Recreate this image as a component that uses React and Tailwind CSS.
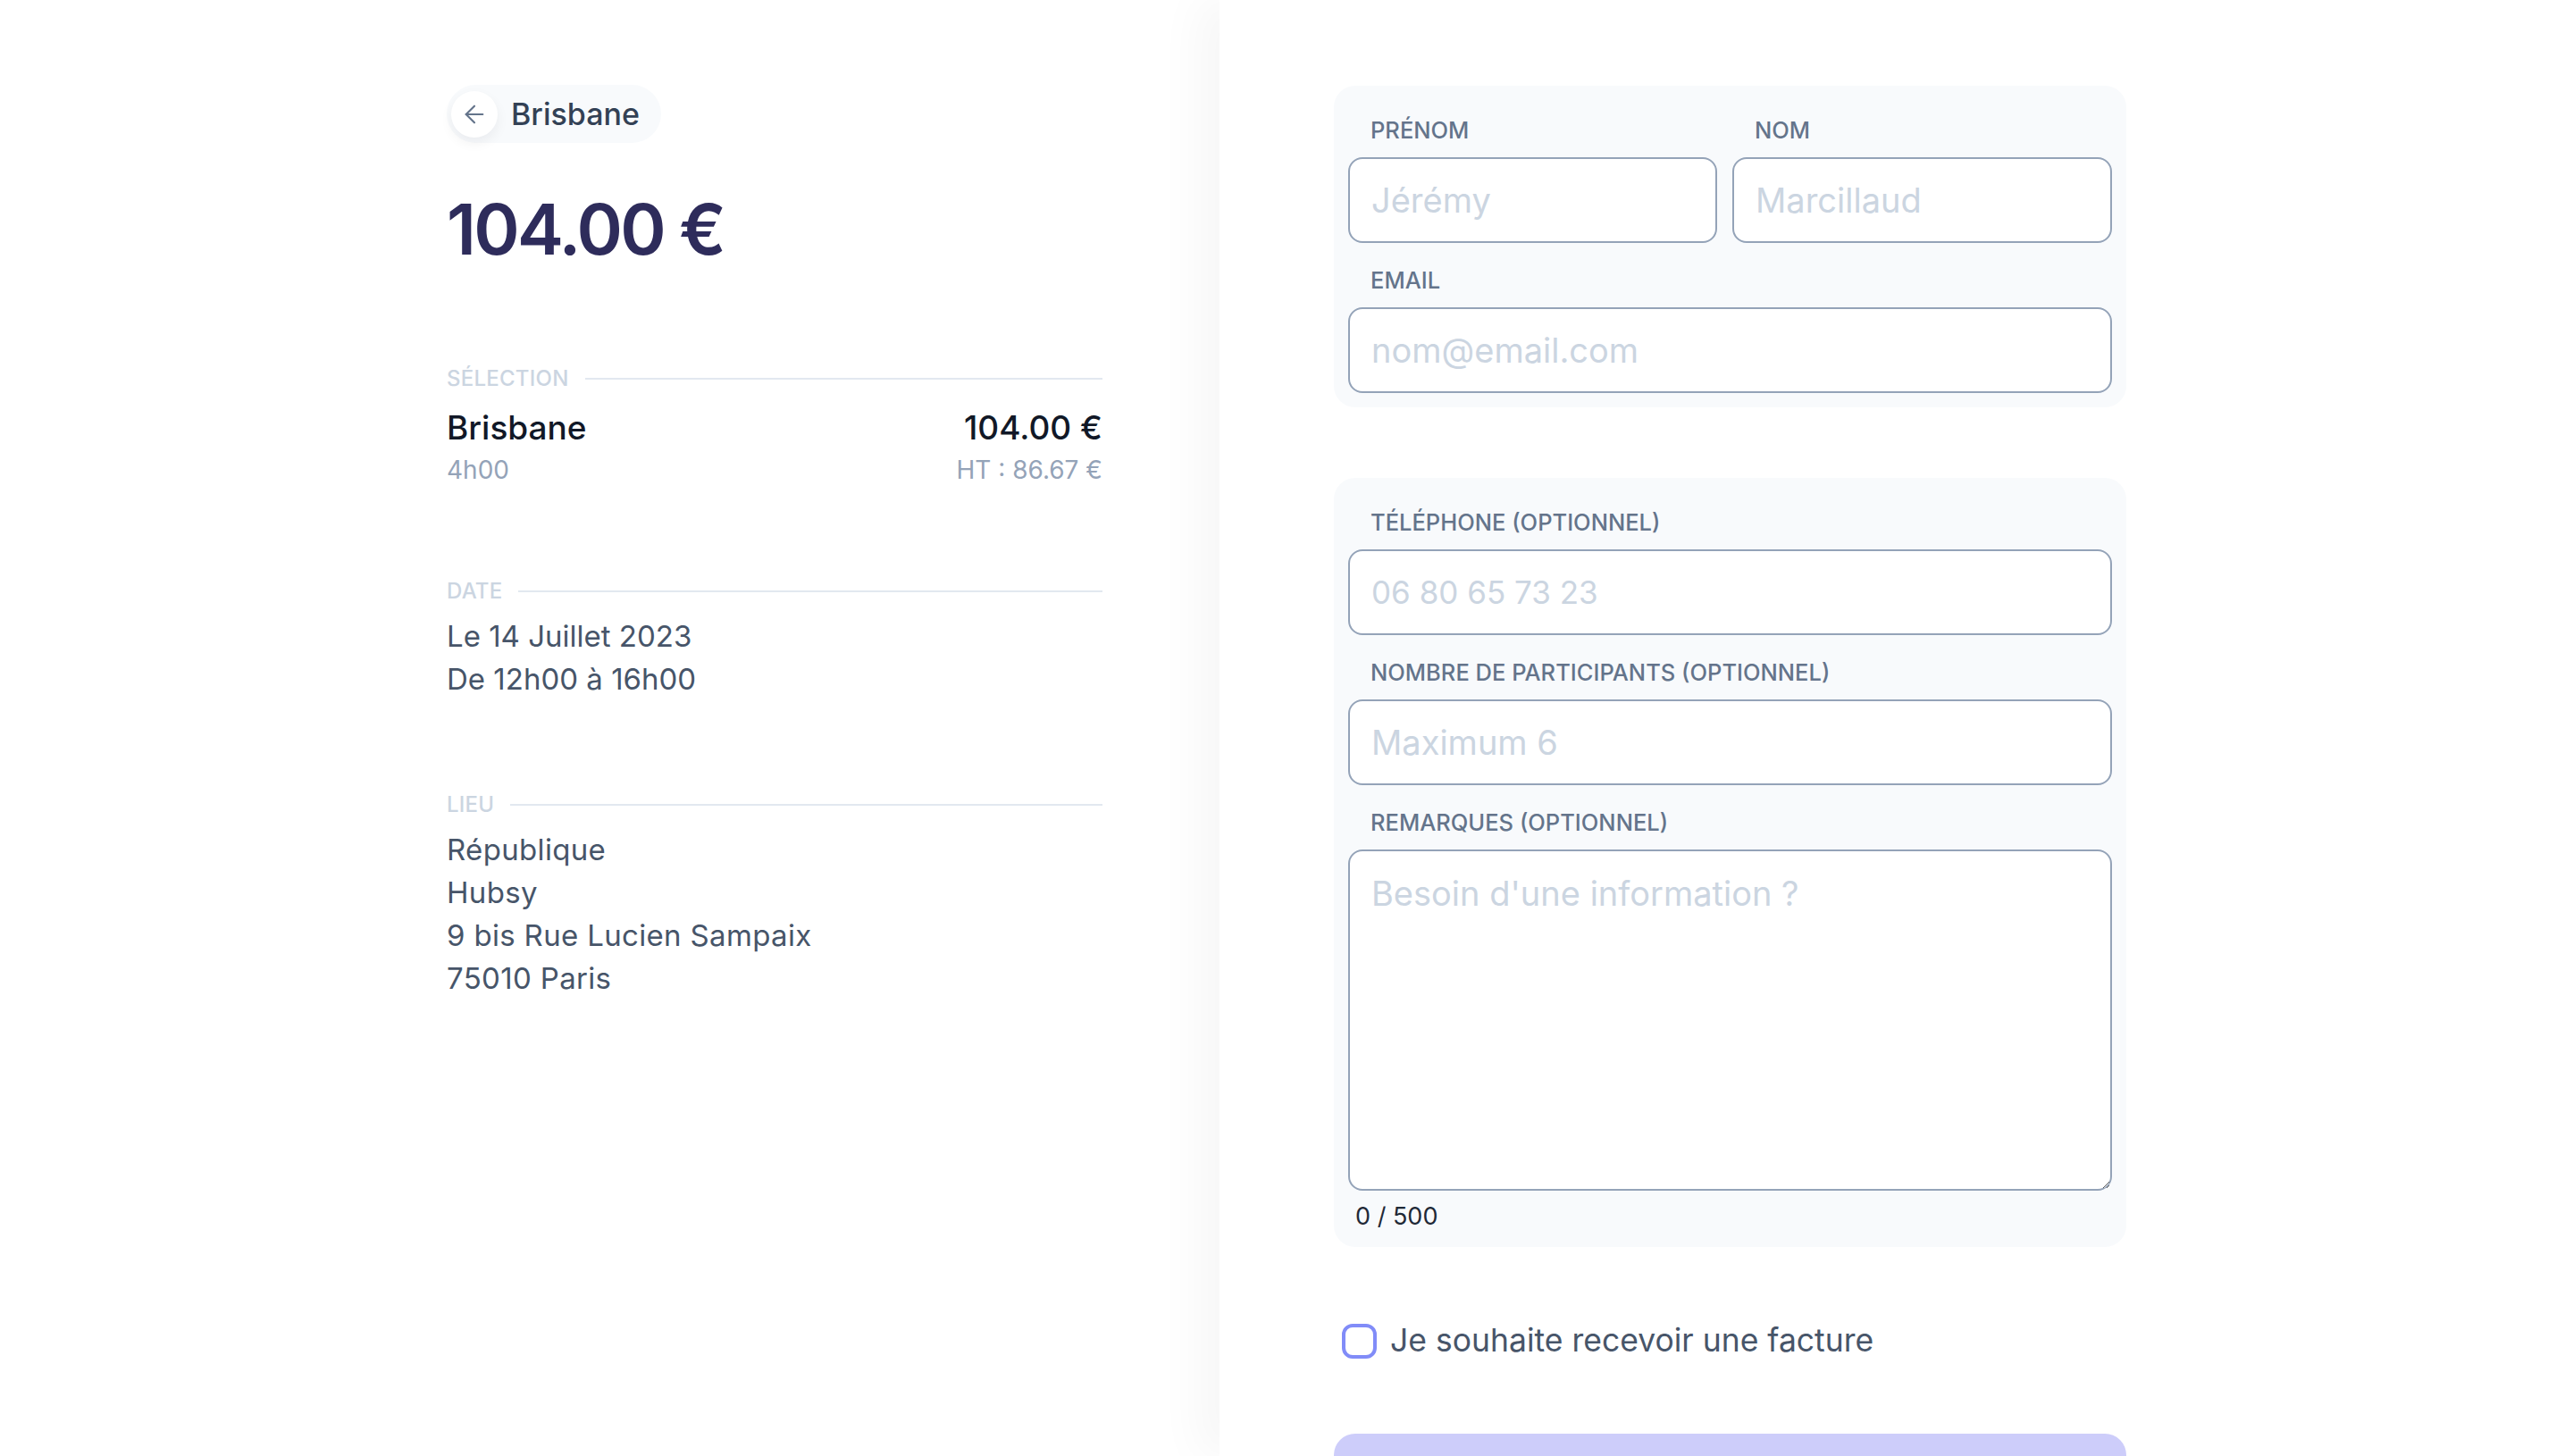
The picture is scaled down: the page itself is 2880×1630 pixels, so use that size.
import React from "react";
import { ArrowLeft } from "lucide-react";

function SectionLabel({ children }) {
  return (
    <div className="flex items-center gap-[18px] h-[32px]">
      <span className="text-[24px] leading-[32px] font-medium uppercase text-[#cbd5e1] tracking-[0.01em]">{children}</span>
      <div className="flex-1 h-[2px] bg-[#e2e8f0]" />
    </div>
  );
}

function Field({ label, children }) {
  return (
    <div className="flex flex-col">
      <label className="pt-[16px] pl-[25px] mb-[12px] h-[36px] text-[25.5px] leading-[36px] font-medium uppercase text-[#64748b] box-content">
        {label}
      </label>
      {children}
    </div>
  );
}

const inputCls =
  "w-full h-[96px] rounded-[16px] border-2 border-[#94a3b8] bg-white px-[24px] text-[38px] text-[#334155] placeholder:text-[#cbd5e1] outline-none";

export default function App() {
  return (
    <div className="flex h-[1630px] overflow-hidden bg-white font-['Inter','Noto_Sans',sans-serif]">
      {/* Left panel */}
      <div className="w-[1365px] shrink-0 flex justify-end pr-[131px] pt-[95px]">
        <div className="w-[734px] flex flex-col">
          <div className="self-start flex items-center h-[65px] rounded-full bg-[#f8fafc] pl-[5px] pr-[24px] gap-[15px]">
            <div className="w-[52px] h-[52px] rounded-full bg-white shadow-[0_6px_14px_rgba(15,23,42,0.06)] flex items-center justify-center">
              <ArrowLeft className="w-[32px] h-[32px] text-[#64748b]" strokeWidth={1.6} />
            </div>
            <span className="text-[34px] font-medium text-[#334155]">Brisbane</span>
          </div>

          <div className="mt-[57px] text-[78px] leading-[80px] font-semibold text-[#2e2c5b] tracking-[-0.035em]">
            104.00 €
          </div>

          <div className="mt-[111px]">
            <SectionLabel>Sélection</SectionLabel>
            <div className="mt-[15px] flex justify-between items-start">
              <div className="flex flex-col">
                <span className="text-[37px] leading-[48px] font-medium text-[#111827]">Brisbane</span>
                <span className="mt-[3px] text-[28px] leading-[40px] text-[#94a3b8]">4h00</span>
              </div>
              <div className="flex flex-col items-end">
                <span className="text-[37px] leading-[48px] font-medium text-[#111827]">104.00 €</span>
                <span className="mt-[3px] text-[28px] leading-[40px] text-[#94a3b8]">HT : 86.67 €</span>
              </div>
            </div>
          </div>

          <div className="mt-[100px]">
            <SectionLabel>Date</SectionLabel>
            <div className="mt-[10px] flex flex-col text-[33px] leading-[48px] text-[#475569]">
              <span>Le 14 Juillet 2023</span>
              <span>De 12h00 à 16h00</span>
            </div>
          </div>

          <div className="mt-[101px]">
            <SectionLabel>Lieu</SectionLabel>
            <div className="mt-[10px] flex flex-col text-[33px] leading-[48px] text-[#475569] tracking-[0.01em]">
              <span>République</span>
              <span>Hubsy</span>
              <span>9 bis Rue Lucien Sampaix</span>
              <span>75010 Paris</span>
            </div>
          </div>
        </div>
      </div>

      {/* Right panel */}
      <div className="relative z-10 flex-1 bg-white shadow-[-24px_0_48px_rgba(15,23,42,0.035)] pl-[128px] pt-[96px]">
        <div className="w-[887px] flex flex-col">
          <div className="rounded-[24px] bg-[#f8fafc] p-[16px] flex flex-col gap-[8px]">
            <div className="grid grid-cols-[413px_1fr] gap-[17px]">
              <Field label="Prénom">
                <input className={inputCls} placeholder="Jérémy" />
              </Field>
              <Field label="Nom">
                <input className={inputCls} placeholder="Marcillaud" />
              </Field>
            </div>
            <Field label="Email">
              <input className={inputCls} placeholder="nom@email.com" />
            </Field>
          </div>

          <div className="mt-[79px] rounded-[24px] bg-[#f8fafc] p-[16px] flex flex-col gap-[8px]">
            <Field label="Téléphone (optionnel)">
              <input
                className="w-full h-[96px] rounded-[16px] border-2 border-[#94a3b8] bg-white px-[24px] text-[35px] text-[#334155] placeholder:text-[#cbd5e1] outline-none"
                placeholder="06 80 65 73 23"
              />
            </Field>
            <Field label="Nombre de participants (optionnel)">
              <input className={inputCls} placeholder="Maximum 6" />
            </Field>
            <Field label="Remarques (optionnel)">
              <textarea
                className="w-full h-[382px] rounded-[16px] border-2 border-[#94a3b8] bg-white px-[24px] pt-[20px] text-[38px] leading-[54px] text-[#334155] placeholder:text-[#cbd5e1] outline-none resize-y"
                placeholder="Besoin d'une information ?"
              />
            </Field>
            <div className="mt-[3px] pl-[8px] text-[27px] leading-[36px] text-[#1f2937]">0 / 500</div>
          </div>

          <div className="mt-[85px] flex items-center gap-[15px] pl-[9px]">
            <div className="w-[39px] h-[39px] rounded-[12px] border-[4px] border-[#818cf8] bg-white" />
            <span className="text-[35.5px] leading-[40px] text-[#475569]">Je souhaite recevoir une facture</span>
          </div>

          <div className="mt-[84px] h-[96px] rounded-[24px] bg-[#cdcdfa]" />
        </div>
      </div>
    </div>
  );
}
